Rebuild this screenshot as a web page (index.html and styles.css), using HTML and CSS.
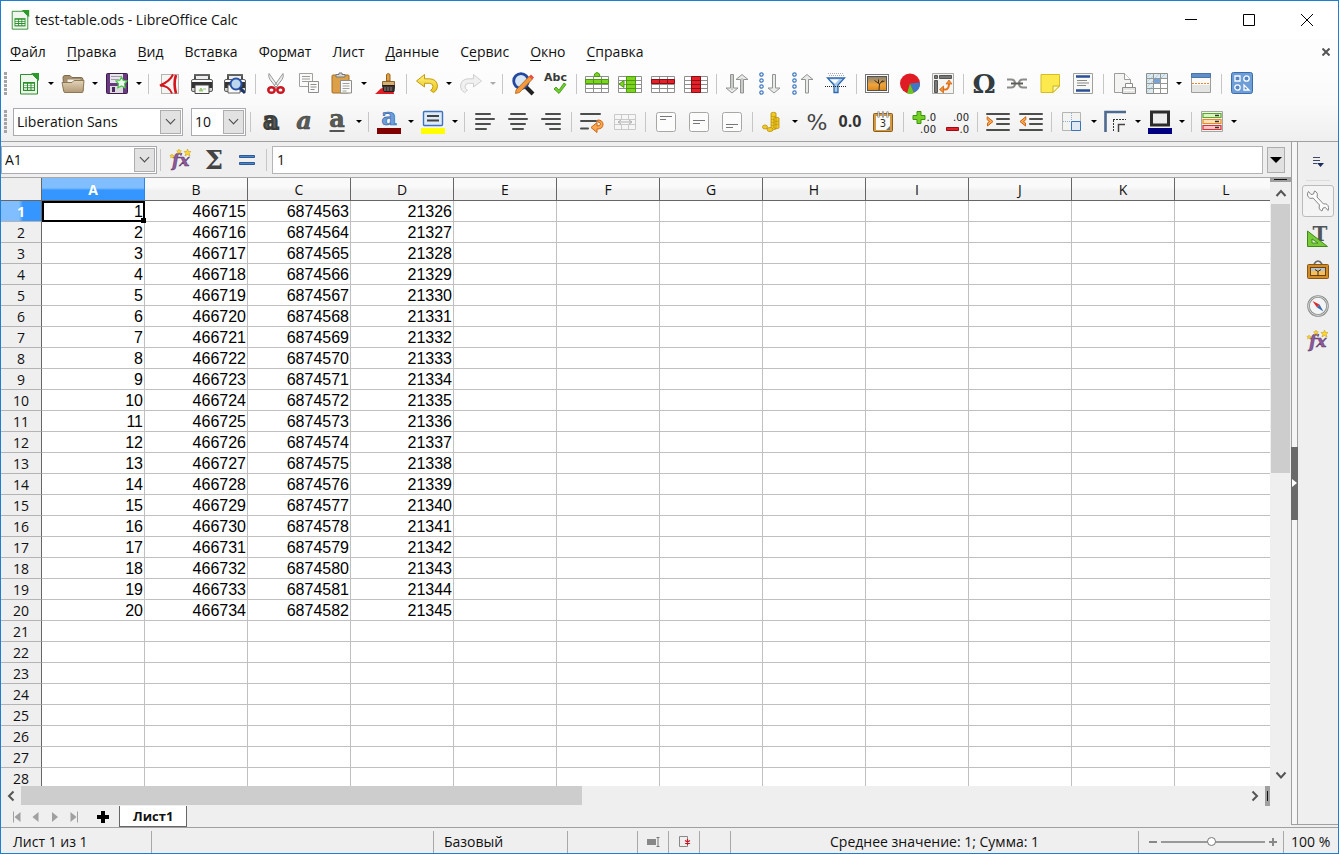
FILE: index.html
```html
<!DOCTYPE html>
<html lang="ru">
<head>
<meta charset="utf-8">
<title>test-table.ods - LibreOffice Calc</title>
<link rel="stylesheet" href="styles.css">
</head>
<body>
<svg class="defs" width="0" height="0" aria-hidden="true">
  <defs>
    <linearGradient id="wood" x1="0" y1="0" x2="0" y2="1"><stop offset="0" stop-color="#e2d3b8"/><stop offset="1" stop-color="#b39a76"/></linearGradient>
    <linearGradient id="grey" x1="0" y1="0" x2="0" y2="1"><stop offset="0" stop-color="#ffffff"/><stop offset="1" stop-color="#c8ccc8"/></linearGradient>
    <linearGradient id="dark" x1="0" y1="0" x2="0" y2="1"><stop offset="0" stop-color="#6a6c6a"/><stop offset="1" stop-color="#2c2e2c"/></linearGradient>
    <linearGradient id="sunset" x1="0" y1="0" x2="0" y2="1"><stop offset="0" stop-color="#8c8574"/><stop offset=".6" stop-color="#f0a43c"/><stop offset="1" stop-color="#dc8a20"/></linearGradient>
    <linearGradient id="gold" x1="0" y1="0" x2="0" y2="1"><stop offset="0" stop-color="#fff27a"/><stop offset="1" stop-color="#e8c21a"/></linearGradient>
    <symbol id="i-doc" viewBox="0 0 24 24"><path d="M3.500 2.500h12l5 5v14.500h-17z" fill="#eef6ee" stroke="#2e8b2e"/><path d="M14 1h8v8z" fill="#2a9a2a"/><rect x="6" y="10" width="12" height="9" fill="#2b922b"/><path d="M7 12.500h3m1 0h2.500m1 0h2.500M7 14.500h3m1 0h2.500m1 0h2.500M7 17h3m1 0h2.500m1 0h2.500" stroke="#fff" stroke-width="1.300"/></symbol>
    <symbol id="i-fx" viewBox="0 0 24 24"><text x="3" y="18" class="t-fx">fx</text><path d="M18.500 1l1 2.500 2.500 0-1.800 1.800.8 2.700-2.500-1.600-2.500 1.600.8-2.700-1.800-1.800 2.500 0z" fill="#ffd92e" stroke="#c9a012" stroke-width=".6"/><path d="M10 1l.7 1.700 1.700 0-1.300 1.300.5 1.700-1.600-1-1.600 1 .5-1.700-1.300-1.300 1.700 0zM3 6l.6 1.400 1.600 0-1.200 1 .4 1.600L3 9l-1.400 1 .4-1.600-1.200-1 1.600 0z" fill="#ffd92e" stroke="#c9a012" stroke-width=".5"/></symbol>
    <symbol id="i-grid" viewBox="0 0 24 24"><path d="M.5 4.500h23v16H.5zM.5 8.500h23M.5 12.500h23M.5 16.500h23M8.500 4.500v16M16.500 4.500v16" fill="#fff" stroke="#8e908e"/></symbol>
  </defs>
</svg>

<div class="window">
  <header class="titlebar">
    <svg class="app-icon" viewBox="0 0 24 24"><use href="#i-doc"/></svg>
    <h1 class="title">test-table.ods - LibreOffice Calc</h1>
    <div class="win-buttons">
      <button type="button" aria-label="Свернуть"><svg viewBox="0 0 12 12"><path d="M0 5.500h12" /></svg></button>
      <button type="button" aria-label="Развернуть"><svg viewBox="0 0 12 12"><path d="M.5.5h11v11H.5z"/></svg></button>
      <button type="button" aria-label="Закрыть"><svg viewBox="0 0 12 12"><path d="M0 0l12 12M12 0L0 12"/></svg></button>
    </div>
  </header>

  <nav class="menubar" aria-label="Меню">
    <button type="button"><u>Ф</u>айл</button>
    <button type="button"><u>П</u>равка</button>
    <button type="button"><u>В</u>ид</button>
    <button type="button">Вст<u>а</u>вка</button>
    <button type="button">Фо<u>р</u>мат</button>
    <button type="button">Лист</button>
    <button type="button"><u>Д</u>анные</button>
    <button type="button">С<u>е</u>рвис</button>
    <button type="button"><u>О</u>кно</button>
    <button type="button"><u>С</u>правка</button>
    <button type="button" class="close-doc" aria-label="Закрыть документ"><svg viewBox="0 0 8 8"><path d="M0.500 0.500l7 7M7.500 .5l-7 7"/></svg></button>
  </nav>

  <div class="toolbar standard" role="toolbar" aria-label="Стандартная">
    <span class="grip"></span>
    <button type="button" class="tool" aria-label="Создать"><svg viewBox="0 0 24 24"><use href="#i-doc"/></svg></button><button type="button" class="more" aria-label="Шаблоны"></button>
    <button type="button" class="tool" aria-label="Открыть"><svg viewBox="0 0 24 24"><path d="M2 5.500q0-2 2-2h5l2 2h9q2 0 2 2V19H3z" fill="#a8906c" stroke="#7d6a4c"/><path d="M6 7h14v6H6z" fill="#f4f0e6" stroke="#9a8a6c"/><path d="M1 10.500h10l2-2h10l-1 11q0 1-1 1H4q-1 0-1.200-1z" fill="url(#wood)" stroke="#8d7854"/></svg></button><button type="button" class="more" aria-label="Последние файлы"></button>
    <button type="button" class="tool" aria-label="Сохранить"><svg viewBox="0 0 24 24"><rect x="1.500" y="1.500" width="21" height="20" rx="1" fill="#6a3a80" stroke="#3f1c50"/><rect x="5" y="2" width="13" height="9" fill="#e8e4ec"/><path d="M6 4.500h11M6 7.500h8" stroke="#a49cac"/><rect x="5" y="14" width="13" height="7" fill="#dcdcdc"/><rect x="7" y="15" width="3" height="5" fill="#4c2860"/><path d="M16.500 5l1.800 3.500 3.700.5-2.500 2.800.6 4-3.600-1.800-3.600 1.800.6-4L11 9l3.700-.5z" fill="#f0fff0" stroke="#45c845" stroke-width="1.200"/></svg></button><button type="button" class="more" aria-label="Сохранить как"></button>
    <span class="sep"></span>
    <button type="button" class="tool" aria-label="Экспорт в PDF"><svg viewBox="0 0 24 24"><rect x="4.500" y="2.500" width="17" height="19" fill="#f5f5f3" stroke="#b5b5b0"/><path d="M16 2.500C14 7 9 11 3 13.500c6 0 10 3 12 8" fill="none" stroke="#d4141c" stroke-width="2"/><path d="M19 3c-2 6-1.500 13 0 18.500" fill="none" stroke="#d4141c" stroke-width="2.600"/></svg></button>
    <button type="button" class="tool" aria-label="Печать"><svg viewBox="0 0 24 24"><rect x="4" y="2" width="16" height="8" fill="url(#dark)"/><rect x="6" y="4" width="12" height="4" fill="#eee"/><rect x="1.500" y="7.500" width="21" height="12" rx="1.500" fill="url(#grey)" stroke="#5c5e5c"/><rect x="2" y="10" width="20" height="6" fill="#333"/><path d="M5 13h14v8.500H5z" fill="#fafafa" stroke="#444"/><path d="M9 19l2-3 2 3zM13 17h3" fill="#8ccf5e" stroke="#9cc47e"/></svg></button>
    <button type="button" class="tool" aria-label="Предпросмотр"><svg viewBox="0 0 24 24"><rect x="4" y="2" width="16" height="8" fill="url(#dark)"/><rect x="6" y="4" width="12" height="4" fill="#eee"/><rect x="1.500" y="7.500" width="21" height="12" rx="1.500" fill="url(#grey)" stroke="#5c5e5c"/><path d="M2 10h20v6H2z" fill="#333"/><path d="M5 13h12v8H5z" fill="#fafafa" stroke="#666"/><circle cx="13" cy="12" r="5.500" fill="#bcd6ee" stroke="#2b50a4" stroke-width="2"/><path d="M17 16l5 5" stroke="#1d3468" stroke-width="3"/></svg></button>
    <span class="sep"></span>
    <button type="button" class="tool" aria-label="Вырезать"><svg viewBox="0 0 24 24"><path d="M5 1.500q-1 3 1 6l6 8 1.500-2zM19 1.500q1 3-1 6l-6 8-1.500-2z" fill="#eef0ee" stroke="#8b8d8b" stroke-width=".9"/><ellipse cx="7.500" cy="18" rx="3.200" ry="2.800" fill="none" stroke="#cc1822" stroke-width="2.600"/><ellipse cx="16.500" cy="18" rx="3.200" ry="2.800" fill="none" stroke="#cc1822" stroke-width="2.600"/></svg></button>
    <button type="button" class="tool" aria-label="Копировать"><svg viewBox="0 0 24 24"><path d="M2.500 1.500h13v13h-13z" fill="#fafafa" stroke="#a0a29e"/><path d="M5 4.500h8M5 7h8M5 9.500h6" stroke="#9a9c98"/><path d="M11.500 9.500h10v11h-10z" fill="#fafafa" stroke="#8c8e8a"/><path d="M13.500 12.500h6M13.500 15h6M13.500 17.500h4" stroke="#8c8e8a"/></svg></button>
    <button type="button" class="tool" aria-label="Вставить"><svg viewBox="0 0 24 24"><rect x="2" y="3" width="17" height="18" rx="1" fill="#dda04a" stroke="#a66e22"/><path d="M6 5V2.500h3V1h3v1.500h3V5z" fill="#d8d8d4" stroke="#777"/><path d="M10.500 8.500h11v12.500h-11z" fill="#fafafa" stroke="#8c8e8a"/><path d="M12.500 11.500h7M12.500 14h7M12.500 16.500h7M12.500 19h4" stroke="#a0a29e"/></svg></button><button type="button" class="more" aria-label="Варианты вставки"></button>
    <button type="button" class="tool" aria-label="Клонировать форматирование"><svg viewBox="0 0 24 24"><path d="M1 22c4-3 5-6 8-6h9c1 3 2 4 2 6z" fill="#e01c24"/><path d="M12.500 9V2.500q1.500-2 3.500 0V9z" fill="#e0a048" stroke="#9c6418"/><path d="M8.500 9.500h12v4h-12z" fill="#d8b070" stroke="#8c6430"/><path d="M8.500 13.500h12l-.5 6h-10z" fill="#3a3432" stroke="#201c1a"/><path d="M11 15v4M14 15v4M17 15v4" stroke="#8a807a"/></svg></button>
    <span class="sep"></span>
    <button type="button" class="tool" aria-label="Отменить"><svg viewBox="0 0 24 24"><path d="M9.500 2.500L1.500 9l8 6v-3.700h5q3.700.2 3.500 3.500-.2 2.400-2.500 3.500l3 2.300q4-2 4-6.500-.5-7-8-7.300h-5z" fill="url(#gold)" stroke="#c49a10"/></svg></button><button type="button" class="more" aria-label="Список отмены"></button>
    <button type="button" class="tool" disabled aria-label="Вернуть"><svg viewBox="0 0 24 24"><path d="M14.500 2.500l8 6.500-8 6v-3.700h-5q-3.700.2-3.500 3.500.2 2.400 2.500 3.500l-3 2.300q-4-2-4-6.500.5-7 8-7.300h5z" fill="#f0f0f0" stroke="#cfcfcf"/></svg></button><button type="button" class="more off" disabled aria-label="Список возврата"></button>
    <span class="sep"></span>
    <button type="button" class="tool" aria-label="Найти и заменить"><svg viewBox="0 0 24 24"><path d="M15 15l7 7" stroke="#222" stroke-width="4"/><circle cx="10" cy="9" r="7.300" fill="#d6e6f4" stroke="#2448a0" stroke-width="2.800"/><path d="M5 18L18.500 4l3 3L8.500 20.500 4.500 21.500z" fill="#f59a3c" stroke="#b05e14" stroke-width=".8"/><path d="M18 4.500l2-2 3 3-2 2z" fill="#e85040"/></svg></button>
    <button type="button" class="tool" aria-label="Орфография"><svg viewBox="0 0 24 24"><text x="0" y="9" class="t-abc">Abc</text><path d="M10 17l2-2 3 3 5-7 2 1.500-7 9z" fill="#6fd02c" stroke="#3c9010" stroke-width=".8"/></svg></button>
    <span class="sep"></span>
    <button type="button" class="tool" aria-label="Добавить строку"><svg viewBox="0 0 24 24"><use href="#i-grid"/><path d="M.5 7.500h23v4H.5z" fill="#7ed321" stroke="#4b9a10"/><path d="M12 .5q3 .5 3 4H9q0-3.500 3-4z" fill="#7ed321" stroke="#4b9a10"/><path d="M8.500 7.500v4M16.500 7.500v4" stroke="#4b9a10"/></svg></button>
    <button type="button" class="tool" aria-label="Добавить столбец"><svg viewBox="0 0 24 24"><use href="#i-grid"/><path d="M8.500 4.500h9v16h-9z" fill="#7ed321" stroke="#4b9a10"/><path d="M8.500 8.500h9m-9 4h9m-9 4h9" stroke="#4b9a10"/><path d="M1 12l5-3.500v7z" fill="#7ed321" stroke="#4b9a10"/></svg></button>
    <button type="button" class="tool" aria-label="Удалить строку"><svg viewBox="0 0 24 24"><use href="#i-grid"/><path d="M.5 7.500h23v4H.5z" fill="#e3212b" stroke="#8e0c14"/><path d="M8.500 7.500v4M16.500 7.500v4" stroke="#8e0c14"/></svg></button>
    <button type="button" class="tool" aria-label="Удалить столбец"><svg viewBox="0 0 24 24"><use href="#i-grid"/><path d="M7.500 4.500h9v16h-9z" fill="#e3212b" stroke="#8e0c14"/><path d="M7.500 8.500h9m-9 4h9m-9 4h9" stroke="#8e0c14"/></svg></button>
    <span class="sep"></span>
    <button type="button" class="tool" aria-label="Сортировать"><svg viewBox="0 0 24 24"><path d="M5.500 2.500v13.500H1l6 5 6-5H8.500V2.500zM15.500 21V7.500H11l6-5 6 5h-4.500V21z" fill="#e9ebe9" stroke="#929492"/><path d="M7 3v15M17 6v15" stroke="#929492" stroke-width=".7"/></svg></button>
    <button type="button" class="tool" aria-label="По возрастанию"><svg viewBox="0 0 24 24"><path d="M14.500 2.500v13.500H10l6 5 6-5h-4.500V2.500z" fill="#e9ebe9" stroke="#929492"/><g fill="#fff" stroke="#3f78c0" stroke-width="1.200"><circle cx="3.500" cy="2.500" r="1.700"/><circle cx="3.500" cy="8.500" r="1.700"/><circle cx="3.500" cy="14.500" r="1.700"/><circle cx="3.500" cy="20.500" r="1.700"/></g></svg></button>
    <button type="button" class="tool" aria-label="По убыванию"><svg viewBox="0 0 24 24"><path d="M14.500 21V7.500H10l6-5 6 5h-4.500V21z" fill="#e9ebe9" stroke="#929492"/><g fill="#fff" stroke="#3f78c0" stroke-width="1.200"><circle cx="3.500" cy="2.500" r="1.700"/><circle cx="3.500" cy="8.500" r="1.700"/><circle cx="3.500" cy="14.500" r="1.700"/><circle cx="3.500" cy="20.500" r="1.700"/></g></svg></button>
    <button type="button" class="tool" aria-label="Автофильтр"><svg viewBox="0 0 24 24"><path d="M4 1.500h16M5 3.500h15" stroke="#aaa" stroke-dasharray="1 1"/><path d="M3.500 6h17l-6.500 7v7.500h-4v-7.500z" fill="#a9cbea" stroke="#2f68ae" stroke-width="1.300"/><path d="M6 7.500h9l-4 4z" fill="#fff"/><path d="M1 14.500h22" stroke="#222" stroke-dasharray="1 1"/></svg></button>
    <span class="sep"></span>
    <button type="button" class="tool" aria-label="Изображение"><svg viewBox="0 0 24 24"><rect x="0.500" y="2.500" width="23" height="18" fill="#fafafa" stroke="#777"/><rect x="2" y="4" width="20" height="15" fill="#55534c"/><rect x="3" y="5" width="18" height="13" fill="url(#sunset)"/><path d="M14 18l.5-6-5-3.500m5 3.500l3-3.500m-1 1.500l3-1m-6 2V7.500" fill="none" stroke="#3c2e18"/></svg></button>
    <button type="button" class="tool" aria-label="Диаграмма"><svg viewBox="0 0 24 24"><circle cx="12" cy="11.500" r="10" fill="#e01b24"/><path d="M12 11.500l10-1a10 10 0 0 1-6 10z" fill="#3d78c4"/><path d="M12 11.500l4 9.500a10 10 0 0 1-7 .5z" fill="#66c622"/></svg></button>
    <button type="button" class="tool" aria-label="Сводная таблица"><svg viewBox="0 0 24 24"><path d="M1.500 1.500h21v20h-21z" fill="#f4f4f2" stroke="#a8aaa6"/><path d="M3.500 3.500h3v3h-3zM8.500 3.500h12v3h-12zM3.500 8.500h3v12h-3z" fill="#777975" stroke="#555"/><path d="M11 17.500h4q3-.5 3-6" fill="none" stroke="#ea7418" stroke-width="2"/><path d="M12.500 14v7l-4-3.500zM15 12h6l-3-4z" fill="#f59030" stroke="#c45c0c" stroke-width=".7"/></svg></button>
    <span class="sep"></span>
    <button type="button" class="tool" aria-label="Специальные символы"><svg viewBox="0 0 24 24"><text x="12" y="21" class="t-omega">Ω</text></svg></button>
    <button type="button" class="tool" aria-label="Гиперссылка"><svg viewBox="0 0 24 24"><path d="M2 7.500h4q4 0 4 4t-4 4H2M22 7.500h-4q-4 0-4 4t4 4h4" fill="none" stroke="#8a8c88" stroke-width="2"/><path d="M6 11.500h12" stroke="#5c5e5a" stroke-width="2"/></svg></button>
    <button type="button" class="tool" aria-label="Комментарий"><svg viewBox="0 0 24 24"><path d="M3 2.500h18.500V14L15 20.500H3z" fill="#fbe94e" stroke="#d6bd22"/><path d="M15 20.500V14h6.500z" fill="#fff8b8" stroke="#c9b020"/></svg></button>
    <button type="button" class="tool" aria-label="Колонтитулы"><svg viewBox="0 0 24 24"><path d="M2.500 1.500h19v20h-19z" fill="#f8f8f6" stroke="#a0a29e"/><path d="M5 4.500h14M5 18.500h14" stroke="#2a4f96" stroke-width="2.400"/><path d="M6 8.500h10M6 11h12M6 13.500h9" stroke="#888"/></svg></button>
    <span class="sep"></span>
    <button type="button" class="tool" aria-label="Область печати"><svg viewBox="0 0 24 24"><path d="M2.500 1.500h10l6 6v13h-16z" fill="#f4f4f2" stroke="#9c9e9a"/><path d="M12.500 1.500v6h6" fill="#fff" stroke="#9c9e9a"/><path d="M13.500 11.500h7v4h-7z" fill="#fff" stroke="#8c8e8a"/><path d="M10.500 15.500h13v6h-13z" fill="#e4e4e2" stroke="#8c8e8a"/><path d="M12 18.500h10" stroke="#fff"/></svg></button>
    <button type="button" class="tool" aria-label="Закрепить"><svg viewBox="0 0 24 24"><path d="M1.500 1.500h21v20h-21z" fill="#fff" stroke="#8c8e8a"/><path d="M2 2h20v4H2zM2 6h6v15H2z" fill="#dcebf2"/><path d="M2 5l4-3M2 10l6-6M2 15l6-6M2 20l6-6M10 6l4-4M16 6l4-4" stroke="#a5c4d4" stroke-width=".7"/><path d="M9 7h6v5H9z" fill="#77a2da"/><path d="M1.500 6.500h21M1.500 11.500h21M1.500 16.500h21M8.500 1.500v20M15.500 1.500v20" stroke="#969894" fill="none"/></svg></button><button type="button" class="more" aria-label="Варианты закрепления"></button>
    <button type="button" class="tool" aria-label="Разбить окно"><svg viewBox="0 0 24 24"><path d="M2.500 1.500h19v19h-19z" fill="#fafafa" stroke="#9c9e9a"/><path d="M2.500 1.500h19v4h-19z" fill="#5f8fc8" stroke="#4a74aa"/><path d="M3 13h18v7H3z" fill="#e4e4e2"/><path d="M3 11.500h18" stroke="#ee8630" stroke-dasharray="2 1"/></svg></button>
    <span class="sep"></span>
    <button type="button" class="tool" aria-label="Функции рисования"><svg viewBox="0 0 24 24"><rect x="1.500" y="0.500" width="21" height="21" rx="2" fill="#6d9ed8" stroke="#3a6cae"/><g fill="#5586c4" stroke="#fff" stroke-width="1.300"><path d="M5 4h5v5H5zM14 13v5h5z"/><circle cx="16.500" cy="6.500" r="2.700"/><circle cx="7.500" cy="15.500" r="2.700"/></g></svg></button>
  </div>

  <div class="toolbar formatting" role="toolbar" aria-label="Форматирование">
    <span class="grip"></span>
    <label class="combo font"><select aria-label="Гарнитура"><option>Liberation Sans</option></select><span class="chev"></span></label>
    <label class="combo size"><select aria-label="Кегль"><option>10</option></select><span class="chev"></span></label>
    <span class="sep"></span>
    <button type="button" class="tool" aria-label="Полужирный"><svg viewBox="0 0 24 24"><text x="12" y="19" class="t-a bold">a</text></svg></button>
    <button type="button" class="tool" aria-label="Курсив"><svg viewBox="0 0 24 24"><text x="12" y="19" class="t-a italic">a</text></svg></button>
    <button type="button" class="tool" aria-label="Подчёркивание"><svg viewBox="0 0 24 24"><text x="12" y="17" class="t-a">a</text><path d="M4.500 21h15" stroke="#555" stroke-width="2"/></svg></button><button type="button" class="more" aria-label="Виды подчёркивания"></button>
    <span class="sep"></span>
    <button type="button" class="tool" aria-label="Цвет шрифта"><svg viewBox="0 0 24 24"><text x="12" y="15" class="t-a blue">a</text><path d="M0 18h24v6H0z" fill="#800000"/></svg></button><button type="button" class="more" aria-label="Цвета шрифта"></button>
    <button type="button" class="tool" aria-label="Цвет фона"><svg viewBox="0 0 24 24"><rect x="2.500" y="1.500" width="19" height="14" rx="1" fill="#dceafa" stroke="#3f72b8" stroke-width="1.400"/><path d="M6 6h12M6 10.500h12" stroke="#444" stroke-width="2"/><path d="M0 18h24v6H0z" fill="#ffff00"/></svg></button><button type="button" class="more" aria-label="Цвета фона"></button>
    <span class="sep"></span>
    <button type="button" class="tool" aria-label="По левому краю"><svg viewBox="0 0 24 24" class="lines"><path d="M3 4h14M3 9h18M3 14h14M3 19h10"/></svg></button>
    <button type="button" class="tool" aria-label="По центру"><svg viewBox="0 0 24 24" class="lines"><path d="M5 4h14M3 9h18M5 14h14M7 19h10"/></svg></button>
    <button type="button" class="tool" aria-label="По правому краю"><svg viewBox="0 0 24 24" class="lines"><path d="M7 4h14M3 9h18M7 14h14M11 19h10"/></svg></button>
    <span class="sep"></span>
    <button type="button" class="tool" aria-label="Переносить текст"><svg viewBox="0 0 24 24" class="lines"><path d="M1 4h19M1 11h15M1 18.500h7"/><path class="orange" d="M18 10q5 0 5 4.500t-6 4.500v3.500l-6-5 6-5V16q3.500 0 3.500-2T18 12z"/></svg></button>
    <button type="button" class="tool" disabled aria-label="Объединить ячейки"><svg viewBox="0 0 24 24"><path d="M1.500 4.500h21v15h-21zM1.500 9.500h21M1.500 14.500h21M8.500 4.500v5m7-5v5m-7 5v5m7-5v5" fill="#f6f6f6" stroke="#c9c9c9"/><path d="M5 12h14M8 10l-3 2 3 2M16 10l3 2-3 2" fill="none" stroke="#b0b0b0"/></svg></button>
    <span class="sep"></span>
    <button type="button" class="tool" aria-label="По верхнему краю"><svg viewBox="0 0 24 24"><rect x="2.500" y="2.500" width="19" height="19" rx="2" class="box"/><path d="M6 6.500h12M6 9.500h6" stroke="#777"/></svg></button>
    <button type="button" class="tool" aria-label="По середине"><svg viewBox="0 0 24 24"><rect x="2.500" y="2.500" width="19" height="19" rx="2" class="box"/><path d="M6 10.500h12M6 13.500h7" stroke="#777"/></svg></button>
    <button type="button" class="tool" aria-label="По нижнему краю"><svg viewBox="0 0 24 24"><rect x="2.500" y="2.500" width="19" height="19" rx="2" class="box"/><path d="M6 14.500h12M6 17.500h7" stroke="#777"/></svg></button>
    <span class="sep"></span>
    <button type="button" class="tool" aria-label="Денежный формат"><svg viewBox="0 0 24 24"><g fill="#f2cb22" stroke="#b98f0c" stroke-width=".8"><path d="M10 3q2.500-1.500 5 0v16q-2.500 1.500-5 0zM13 8q2.500-1.500 5 0v10q-2.500 1.500-5 0z"/><ellipse cx="4" cy="17" rx="2.500" ry="2"/><ellipse cx="9" cy="19.500" rx="3" ry="2"/></g><path d="M10 6q2.500 1.500 5 0m-5 3q1.500 1 3 .5m-3 2.500q1.500 1 3 .5m-3 2.500q1.500 1 3 .5m0-4.500q2.500 1 5 0m-5 3q2.500 1 5 0" fill="none" stroke="#b98f0c" stroke-width=".7"/></svg></button><button type="button" class="more" aria-label="Валюты"></button>
    <button type="button" class="tool" aria-label="Процентный формат"><svg viewBox="0 0 24 24"><text x="12" y="20" class="t-pct">%</text></svg></button>
    <button type="button" class="tool" aria-label="Числовой формат"><svg viewBox="0 0 24 24"><text x="12" y="17" class="t-num">0.0</text></svg></button>
    <button type="button" class="tool" aria-label="Формат даты"><svg viewBox="0 0 24 24"><rect x="2.500" y="3.500" width="19" height="18" rx="1" fill="#d29a44" stroke="#8f5d16"/><path d="M5 6h14v14H5z" fill="#fbfbf8"/><path d="M7.500 1.500v6m4.500-6v6m4.500-6v6" stroke="#777" stroke-width="2"/><path d="M7.500 2v5m4.500-5v5m4.500-5v5" stroke="#eee" stroke-width=".7"/><text x="12" y="17" class="t-date">3</text><path d="M15 20l4-4v4z" fill="#777"/></svg></button>
    <span class="sep"></span>
    <button type="button" class="tool" aria-label="Добавить разряд"><svg viewBox="0 0 24 24"><path d="M5 1.500h4v4h4v4H9v4H5v-4H1v-4h4z" fill="#74d024" stroke="#3e930e"/><text x="24" y="11" class="t-dec">.0</text><text x="24" y="23" class="t-dec">.00</text></svg></button>
    <button type="button" class="tool" aria-label="Удалить разряд"><svg viewBox="0 0 24 24"><path d="M1.500 17.500h12v3h-12z" fill="#e6202a" stroke="#9a0c14"/><text x="24" y="11" class="t-dec">.00</text><text x="24" y="23" class="t-dec">.0</text></svg></button>
    <span class="sep"></span>
    <button type="button" class="tool" aria-label="Увеличить отступ"><svg viewBox="0 0 24 24" class="lines"><path d="M1 4h22M11 9h12M11 14h12M1 20h22"/><path class="orange" d="M1.500 7l5.500 4.500L1.500 16v-3l2-1.500-2-1.500z"/></svg></button>
    <button type="button" class="tool" aria-label="Уменьшить отступ"><svg viewBox="0 0 24 24" class="lines"><path d="M1 4h22M11 9h12M11 14h12M1 20h22"/><path class="orange" d="M6.500 7L1 11.500 6.500 16v-3l-2-1.500 2-1.500z"/></svg></button>
    <span class="sep"></span>
    <button type="button" class="tool" aria-label="Обрамление"><svg viewBox="0 0 24 24"><path d="M2.500 2.500h18v18h-18z" fill="#f3f3f1" stroke="#b4b6b2"/><path d="M11.500 3v17M3 11.500h17" stroke="#8eaed2" stroke-dasharray="1 1"/><path d="M11.500 11.500h9v9h-9z" fill="#dfeaf4" stroke="#3c74b8"/></svg></button><button type="button" class="more" aria-label="Виды обрамления"></button>
    <button type="button" class="tool" aria-label="Стиль линии"><svg viewBox="0 0 24 24"><path d="M1.500 22V2H22" fill="none" stroke="#4e6a8e" stroke-width="2.600"/><path d="M9 9.500h13M9.500 10v12" stroke="#333" stroke-dasharray="2 1"/><path d="M14.500 22v-7.500H21" fill="none" stroke="#444" stroke-width="1.500"/></svg></button><button type="button" class="more" aria-label="Стили линии"></button>
    <button type="button" class="tool" aria-label="Цвет обрамления"><svg viewBox="0 0 24 24"><rect x="3.500" y="2" width="17" height="13" fill="#ececec" stroke="#2c2c2c" stroke-width="3"/><path d="M0 18h24v6H0z" fill="#000080"/></svg></button><button type="button" class="more" aria-label="Цвета обрамления"></button>
    <span class="sep"></span>
    <button type="button" class="tool" aria-label="Условное форматирование"><svg viewBox="0 0 24 24"><path d="M1.500 1.500h21v20h-21z" fill="#f2f2f0" stroke="#a4a6a2"/><g stroke-width="1.200"><path d="M3 3.500h18v4H3z" fill="#dcf4c4" stroke="#5aa628"/><path d="M3 9.500h18v4H3z" fill="#fce0b8" stroke="#e58a24"/><path d="M3 15.500h18v4H3z" fill="#fcc4c4" stroke="#dc2c34"/></g><path d="M15 5.500h4m-4 6h4m-4 6h4" stroke="#333" stroke-width="1.300"/></svg></button><button type="button" class="more" aria-label="Виды условий"></button>
  </div>

  <div class="work">
    <main class="editor">
      <div class="formula-bar">
        <div class="combo name"><input type="text" value="A1" aria-label="Область листа"><button type="button" class="chev" aria-label="Список областей"></button></div>
        <span class="sep"></span>
        <button type="button" class="tool" aria-label="Мастер функций"><svg viewBox="0 0 24 24"><use href="#i-fx"/></svg></button>
        <button type="button" class="tool" aria-label="Сумма"><svg viewBox="0 0 24 24"><text x="12" y="21" class="t-sigma">Σ</text></svg></button>
        <button type="button" class="tool" aria-label="Формула"><svg viewBox="0 0 24 24"><path d="M4.500 7.500h15v2h-15zM4.500 14.500h15v2h-15z" fill="#4f86c6" stroke="#2d5c9c"/></svg></button>
        <span class="sep"></span>
        <input type="text" class="formula" value="1" aria-label="Строка ввода">
        <button type="button" class="expand" aria-label="Развернуть строку формул"></button>
      </div>

      <div class="sheet-area">
        <div class="sheet"><table class="grid" id="grid"></table></div>
        <div class="vscroll">
          <span class="split-h"></span>
          <button type="button" aria-label="Вверх"><svg viewBox="0 0 12 12"><path d="M1.500 9L6 4l4.500 5"/></svg></button>
          <div class="track"><div class="thumb"></div></div>
          <button type="button" aria-label="Вниз"><svg viewBox="0 0 12 12"><path d="M1.500 3.500L6 8.500l4.500-5"/></svg></button>
        </div>
      </div>

      <div class="hscroll">
        <button type="button" aria-label="Влево"><svg viewBox="0 0 12 12"><path d="M8.500 1.500L4 6l4.500 4.500"/></svg></button>
        <div class="track"><div class="thumb"></div></div>
        <button type="button" aria-label="Вправо"><svg viewBox="0 0 12 12"><path d="M3.500 1.500L8 6l-4.500 4.500"/></svg></button>
        <span class="split-v"></span>
      </div>

      <div class="tabs">
        <button type="button" class="nav" aria-label="Первый лист"><svg viewBox="0 0 12 12"><path d="M2 .5h1v11H2zM9.500 1v10L3.500 6z"/></svg></button>
        <button type="button" class="nav" aria-label="Предыдущий лист"><svg viewBox="0 0 12 12"><path d="M8.500 1v10l-6-5z"/></svg></button>
        <button type="button" class="nav" aria-label="Следующий лист"><svg viewBox="0 0 12 12"><path d="M3 1v10l6-5z"/></svg></button>
        <button type="button" class="nav" aria-label="Последний лист"><svg viewBox="0 0 12 12"><path d="M2.500 1v10l6-5zM9 .5h1v11H9z"/></svg></button>
        <button type="button" class="add" aria-label="Добавить лист"><svg viewBox="0 0 12 12"><path d="M4 0h4v4h4v4H8v4H4V8H0V4h4z"/></svg></button>
        <button type="button" class="tab">Лист1</button>
      </div>
    </main>

    <div class="splitter"><button type="button" aria-label="Скрыть панель"></button></div>

    <aside class="sidebar">
      <button type="button" class="side-menu" aria-label="Параметры боковой панели"><svg viewBox="0 0 12 12"><path d="M1 2.500h7M1 5.500h7M1 8.500h4" stroke="#3c4866"/><path d="M5 8h7l-3.500 4z" fill="#1c2c5c"/></svg></button>
      <div class="decks">
        <button type="button" class="active" aria-label="Свойства"><svg viewBox="0 0 24 24"><path d="M2.500 2.500l2.500 3 2.500-.5 1-3Q12.500 3.500 11 8l6.500 7q4.500-1 5 3.500.2 1.500-.5 3l-2.500-3-2.500.5-1 3q-4-1.500-2.500-6L7 9Q2.500 10.500 1.500 6 1.300 4 2.500 2.500z" fill="#fbfbfb" stroke="#858783"/></svg></button>
        <button type="button" aria-label="Стили"><svg viewBox="0 0 24 24"><text x="14" y="17" class="t-tee">T</text><path d="M1.500 7v15.500h20z" fill="#7acb3c" stroke="#3d8a18"/><path d="M6 15v4h6z" fill="#edf8e4" stroke="#3d8a18"/></svg></button>
        <button type="button" aria-label="Галерея"><svg viewBox="0 0 24 24"><path d="M8 5q4-6 8 0" fill="none" stroke="#666" stroke-width="1.500"/><rect x="1.500" y="5.500" width="21" height="14" rx="1" fill="#d18c2c" stroke="#8c560e"/><rect x="4.500" y="8.500" width="15" height="8" fill="#f7bf5a" stroke="#6c430c"/><path d="M5 9h14v3H5z" fill="#b9c3cc"/><path d="M12 16.500V12.500L9 10.500m3 2l3-2" fill="none" stroke="#3c2c10"/></svg></button>
        <button type="button" aria-label="Навигатор"><svg viewBox="0 0 24 24"><circle cx="12" cy="12" r="9.500" fill="#f2f4f5" stroke="#8a8c8a" stroke-width="2.600"/><circle cx="12" cy="12" r="9.500" fill="none" stroke="#d6d8d6"/><path d="M6.500 7l7 3.500-2.500 3z" fill="#dc2c34"/><path d="M17.500 17.500l-4-7-2.500 3z" fill="#3d6eac"/></svg></button>
        <button type="button" aria-label="Функции"><svg viewBox="0 0 24 24"><use href="#i-fx"/></svg></button>
      </div>
    </aside>
  </div>

  <footer class="status">
    <span class="cell sheets">Лист 1 из 1</span>
    <span class="cell blank"></span>
    <span class="cell style">Базовый</span>
    <span class="cell lang"></span>
    <span class="cell icon"><svg viewBox="0 0 14 14"><path d="M1 4h9v6H1z" fill="#888"/><path d="M10.500 2.500h3M10.500 11.500h3M12 2.500v9" stroke="#777" fill="none"/></svg></span>
    <span class="cell icon"><svg viewBox="0 0 14 14"><path d="M10.500 4V1.500h-8v10h8V9" fill="none" stroke="#888"/><path d="M10.500 4v6M8 5.500l5 3M13 5.500l-5 3" stroke="#c41824" stroke-width="1.200"/></svg></span>
    <span class="cell icon"></span>
    <span class="cell summary">Среднее значение: 1; Сумма: 1</span>
    <span class="cell zoom"><input type="range" min="0" max="100" value="48" aria-label="Масштаб"></span>
    <span class="cell percent">100 %</span>
  </footer>
</div>
<script src="app.js"></script>
</body>
</html>
```
FILE: styles.css
```css
* { box-sizing: border-box; }

body {
  margin: 0;
  font-family: "Open Sans", "Noto Sans", sans-serif;
  font-size: 14px;
  line-height: 20px;
  color: #111;
}

button, input, select {
  font: inherit;
  color: inherit;
  margin: 0;
  padding: 0;
  border: 0;
  border-radius: 0;
  background: none;
  outline: 0;
}

svg { display: block; flex: none; }
.defs { position: absolute; }

.window {
  display: flex;
  flex-direction: column;
  height: 100vh;
  border: 1px solid #1c7fd4;
  background: #efefef;
  overflow: hidden;
}

/* Title and menu */
.titlebar {
  display: flex;
  align-items: center;
  flex: none;
  height: 38px;
  padding: 0 2px 0 8px;
  background: #fff;
}
.app-icon { width: 22px; height: 22px; margin-right: 4px; }
.title { margin: 0; font-size: 14px; font-weight: 400; }
.win-buttons { display: flex; margin-left: auto; }
.win-buttons button {
  display: grid;
  place-items: center;
  width: 58px;
  height: 36px;
}
.win-buttons svg { width: 12px; height: 12px; fill: none; stroke: #000; }

.menubar {
  display: flex;
  align-items: center;
  flex: none;
  gap: 21px;
  height: 26px;
  padding: 0 8px 0 9px;
  background: #fdfdfd;
}
.menubar u { text-underline-offset: 3px; text-decoration-thickness: 1px; text-decoration-skip-ink: none; }
.close-doc { margin-left: auto; }
.close-doc svg { width: 8px; height: 8px; fill: none; stroke: #555; stroke-width: 2; }

/* Toolbars */
.toolbar { display: flex; align-items: center; flex: none; }
.standard { height: 37px; background: linear-gradient(#fdfdfd, #fafafa); }
.formatting {
  height: 40px;
  background: linear-gradient(#fafafa, #efefef);
  border-bottom: 1px solid #a0a0a0;
}
.grip {
  flex: none;
  width: 3px;
  height: 23px;
  margin: 0 5px 0 3px;
  background: repeating-linear-gradient(#a4a4a4 0 3px, transparent 3px 4px);
}
.formatting .grip { margin-right: 6px; }
.tool {
  display: grid;
  place-items: center;
  flex: none;
  width: 33px;
  height: 32px;
}
.tool svg { width: 24px; height: 24px; overflow: visible; }
.more {
  display: grid;
  place-items: center;
  flex: none;
  width: 11px;
  height: 32px;
}
.more::before {
  content: "";
  border: 3px solid transparent;
  border-top-color: #000;
  border-bottom: 0;
}
.more.off::before { border-top-color: #aaa; }
.sep {
  flex: none;
  width: 1px;
  height: 20px;
  margin: 0 3px 0 4px;
  background: #c6c6c6;
}

.combo {
  position: relative;
  display: flex;
  flex: none;
  height: 28px;
  border: 1px solid #a9abb0;
  background: #fff;
}
.combo select, .combo input {
  flex: 1;
  min-width: 0;
  padding-left: 3px;
  appearance: none;
}
.combo .chev {
  position: absolute;
  top: 1px;
  right: 1px;
  bottom: 1px;
  display: grid;
  place-items: center;
  width: 21px;
  border: 1px solid #adadad;
  background: #e2e2e2;
  pointer-events: none;
}
.chev::before {
  content: "";
  width: 6px;
  height: 6px;
  margin-top: -4px;
  border: solid #444;
  border-width: 0 1px 1px 0;
  transform: rotate(45deg);
}
.font { width: 170px; margin-right: 8px; }
.size { width: 55px; }
.name { width: 156px; }

.lines { fill: none; stroke: #4c4e4c; stroke-width: 2; stroke-linecap: round; }
.orange { fill: #fca850; stroke: #cc6410; stroke-width: 1; }
.box { fill: #fcfcfc; stroke: #a6a8a4; }
.t-a { font: bold 24px "DejaVu Serif", serif; text-anchor: middle; fill: #5a5c5a; stroke: #3c3e3c; stroke-width: .6px; }
.t-a.bold { stroke-width: 2px; }
.t-a.italic { font-style: italic; }
.t-a.blue { fill: #6c9edc; stroke: #2b5ca4; }
.t-abc { font: bold 11px "DejaVu Sans", sans-serif; fill: #383a38; }
.t-omega { font: bold 26px "DejaVu Serif", serif; text-anchor: middle; fill: #333c40; }
.t-sigma { font: bold 26px "DejaVu Serif", serif; text-anchor: middle; fill: #444; }
.t-pct { font: 22px "DejaVu Sans", sans-serif; text-anchor: middle; fill: #444; }
.t-num { font: bold 16px "Open Sans", sans-serif; text-anchor: middle; fill: #333; }
.t-date { font: 10px "DejaVu Sans", sans-serif; text-anchor: middle; fill: #333; }
.t-dec { font: 10px "DejaVu Sans", sans-serif; text-anchor: end; fill: #222; }
.t-fx { font: italic bold 17px "DejaVu Serif", serif; fill: #8c5a9c; stroke: #5c3468; stroke-width: .5px; }
.t-tee { font: bold 20px "DejaVu Serif", serif; text-anchor: middle; fill: #50565a; }

/* Work area */
.work { display: flex; flex: 1; min-height: 0; }
.editor { display: flex; flex-direction: column; flex: 1; min-width: 0; }

.formula-bar {
  display: flex;
  align-items: center;
  flex: none;
  height: 35px;
  padding-right: 6px;
}
.formula-bar .sep { margin: 0 3px; height: 22px; }
.formula {
  flex: 1;
  min-width: 0;
  height: 28px;
  padding-left: 4px;
  margin: 0 4px 0 2px;
  border: 1px solid #b4b4b4;
  background: #fff;
}
.expand {
  display: grid;
  place-items: center;
  width: 18px;
  height: 26px;
  border: 1px solid #adadad;
  background: #e1e1e1;
}
.expand::before {
  content: "";
  border: 6px solid transparent;
  border-top-color: #000;
  border-bottom: 0;
}

.sheet-area { display: flex; flex: 1; min-height: 0; }
.sheet { flex: 1; min-width: 0; overflow: hidden; background: #fff; border-top: 1px solid #a8a8a8; }
.grid {
  width: 1277px;
  table-layout: fixed;
  border-collapse: separate;
  border-spacing: 0;
}
.grid th, .grid td { height: 21px; padding: 2px 0 0; border: solid #c0c0c0; border-width: 0 1px 1px 0; line-height: 18px; }
.grid th { font-weight: 400; background: #efefef; border-color: #b4b4b4; }
.grid thead th {
  height: 23px;
  border-color: #666;
  background: linear-gradient(#fafafa 40%, #f0f0f0 60%);
}
.grid thead th.corner { width: 41px; background: #efefef; }
.grid tbody th { border-right-color: #666; }
.grid thead th.current {
  color: #fff;
  font-weight: 700;
  border-right-color: #2c86e8;
  background: linear-gradient(#80beff 45%, #3596ff 55%);
}
.grid tbody th.current { color: #fff; font-weight: 700; background: linear-gradient(90deg, #80beff 45%, #3596ff 55%); }
.grid td {
  padding-right: 1px;
  text-align: right;
  font-family: "Liberation Sans", Arial, sans-serif;
  font-size: 16px;
  color: #000;
}
.grid td.cursor { position: relative; outline: 2px solid #000; outline-offset: -2px; }
.grid td.cursor::after {
  content: "";
  position: absolute;
  right: -2px;
  bottom: -2px;
  width: 5px;
  height: 5px;
  background: #000;
}

.vscroll { display: flex; flex-direction: column; flex: none; width: 21px; }
.vscroll button, .hscroll button { display: grid; place-items: center; flex: none; }
.vscroll button { height: 22px; }
.hscroll button { width: 20px; }
.vscroll svg, .hscroll svg { width: 12px; height: 12px; fill: none; stroke: #555; stroke-width: 2; }
.track { flex: 1; }
.thumb { background: #cdcdcd; }
.vscroll .thumb { width: 19px; margin: 0 1px; height: 48%; }
.hscroll .thumb { height: 19px; width: 45.8%; }
.split-h { flex: none; height: 5px; border: solid #a0a0a0; border-width: 2px 4px; background: #111; }
.split-v { width: 5px; border: solid #a0a0a0; border-width: 5px 2px; background: #111; }
.hscroll { display: flex; flex: none; height: 20px; padding-right: 21px; }

.tabs { display: flex; align-items: center; flex: none; height: 21px; padding-left: 7px; }
.nav { width: 19px; height: 20px; padding-left: 3px; }
.nav svg { width: 12px; height: 12px; fill: #a0a0a0; }
.add { margin: 0 10px 0 13px; }
.add svg { width: 12px; height: 12px; fill: #000; }
.tab {
  align-self: stretch;
  padding: 0 13px;
  border: 1px solid #666;
  border-top: 0;
  background: #fff;
  font-weight: 700;
  font-size: 13px;
  line-height: 20px;
}

.splitter {
  display: flex;
  align-items: center;
  flex: none;
  width: 7px;
  margin-bottom: 2px;
  border: solid #a0a0a0;
  border-width: 0 1px 1px;
  background: #f6f6f6;
}
.splitter button {
  display: grid;
  place-items: center;
  flex: none;
  width: 7px;
  height: 73px;
  margin-left: -1px;
  background: #6a6a6a;
}
.splitter button::before { content: ""; border: 4px solid transparent; border-left: 5px solid #fff; border-right: 0; }

.sidebar {
  display: flex;
  flex-direction: column;
  align-items: center;
  flex: none;
  width: 40px;
  margin-bottom: 2px;
  border-bottom: 1px solid #a0a0a0;
}
.side-menu { display: grid; place-items: center; width: 24px; height: 39px; border-bottom: 1px solid #ddd; }
.side-menu svg { width: 12px; height: 12px; }
.decks { display: grid; gap: 3px; padding-top: 4px; }
.decks button { display: grid; place-items: center; width: 32px; height: 32px; border: 1px solid transparent; border-radius: 3px; }
.decks .active { border-color: #bbb; background: #f4f4f4; }
.decks svg { width: 24px; height: 24px; overflow: visible; }

/* Status bar */
.status { display: flex; align-items: center; flex: none; height: 26px; padding-top: 2px; border-top: 1px solid #a0a0a0; }
.cell { display: flex; align-items: center; flex: none; height: 22px; border-right: 1px solid #a8a8a8; white-space: nowrap; }
.sheets { width: 151px; padding-left: 12px; }
.blank { width: 282px; }
.style { width: 134px; padding-left: 10px; }
.lang { width: 70px; }
.icon { width: 31px; justify-content: center; }
.icon svg { width: 14px; height: 14px; }
.summary { flex: 1; min-width: 0; justify-content: center; }
.zoom { width: 145px; gap: 4px; padding: 0 6px 0 10px; }
.zoom::before, .zoom::after {
  content: "";
  flex: none;
  width: 8px;
  height: 8px;
  background: linear-gradient(#888, #888) center / 8px 2px no-repeat;
}
.zoom::after { background: linear-gradient(#888, #888) center / 8px 2px no-repeat, linear-gradient(#888, #888) center / 2px 8px no-repeat; }
.zoom input { flex: 1; min-width: 0; height: 12px; appearance: none; background: linear-gradient(#999, #999) center / 100% 2px no-repeat; }
.zoom input::-webkit-slider-thumb { appearance: none; width: 9px; height: 9px; border: 1px solid #777; border-radius: 50%; background: #fff; }
.percent { width: 54px; padding-left: 7px; border-right: 0; }
```
FILE: app.js
```js
const columns = "ABCDEFGHIJKL".split("");
const grid = document.getElementById("grid");

const head = grid.createTHead().insertRow();
const corner = document.createElement("th");
corner.className = "corner";
head.append(corner);
columns.forEach((name, i) => {
  const th = document.createElement("th");
  th.scope = "col";
  th.textContent = name;
  if (i === 0) th.className = "current";
  head.append(th);
});

const body = grid.createTBody();
for (let n = 1; n <= 28; n++) {
  const row = body.insertRow();
  const th = document.createElement("th");
  th.scope = "row";
  th.textContent = n;
  if (n === 1) th.className = "current";
  row.append(th);
  const values = n <= 20 ? [n, 466714 + n, 6874562 + n, 21325 + n] : [];
  columns.forEach((_, i) => {
    const td = row.insertCell();
    if (i < values.length) td.textContent = values[i];
    if (n === 1 && i === 0) td.className = "cursor";
  });
}
```
